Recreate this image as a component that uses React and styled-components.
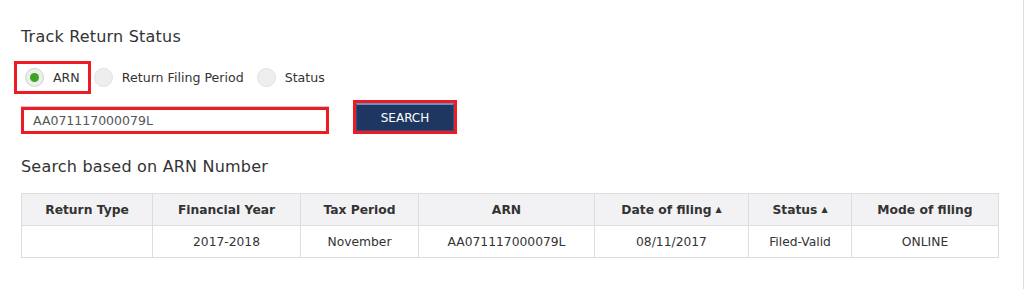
import React, { useState } from "react";
import styled, { createGlobalStyle } from "styled-components";

const GlobalStyle = createGlobalStyle`
  body {
    margin: 0;
    background: #fff;
    font-family: "DejaVu Sans", Verdana, sans-serif;
    color: #333;
  }
`;

const columns = [
  { label: "Return Type", width: 131 },
  { label: "Financial Year", width: 148 },
  { label: "Tax Period", width: 118 },
  { label: "ARN", width: 176 },
  { label: "Date of filing", width: 154, sort: true },
  { label: "Status", width: 103, sort: true },
  { label: "Mode of filing", width: 147 },
];

const rows = [["", "2017-2018", "November", "AA071117000079L", "08/11/2017", "Filed-Valid", "ONLINE"]];

const options = [
  { id: "arn", label: "ARN" },
  { id: "period", label: "Return Filing Period" },
  { id: "status", label: "Status" },
];

export default function App() {
  const [selected, setSelected] = useState("arn");
  const [arn, setArn] = useState("AA071117000079L");

  return (
    <Page>
      <GlobalStyle />
      <Title>Track Return Status</Title>
      <RadioRow>
        {options.map((opt) => (
          <RadioOption
            key={opt.id}
            $highlighted={opt.id === "arn"}
            onClick={() => setSelected(opt.id)}
          >
            <RadioCircle $checked={selected === opt.id} />
            <RadioLabel>{opt.label}</RadioLabel>
          </RadioOption>
        ))}
      </RadioRow>
      <SearchRow>
        <InputFrame>
          <ArnInput value={arn} onChange={(e) => setArn(e.target.value)} />
        </InputFrame>
        <ButtonFrame>
          <SearchButton>SEARCH</SearchButton>
        </ButtonFrame>
      </SearchRow>
      <SubTitle>Search based on ARN Number</SubTitle>
      <Table>
        <colgroup>
          {columns.map((c) => (
            <col key={c.label} style={{ width: c.width }} />
          ))}
        </colgroup>
        <thead>
          <tr>
            {columns.map((c) => (
              <Th key={c.label}>
                {c.label}
                {c.sort && <SortArrow>▲</SortArrow>}
              </Th>
            ))}
          </tr>
        </thead>
        <tbody>
          {rows.map((r, i) => (
            <tr key={i}>
              {r.map((cell, j) => (
                <Td key={j}>{cell}</Td>
              ))}
            </tr>
          ))}
        </tbody>
      </Table>
    </Page>
  );
}

const Page = styled.div`
  box-sizing: border-box;
  width: 1024px;
  height: 289px;
  padding: 27px 0 0 21px;
  border-right: 1px solid #ddd;
  display: flex;
  flex-direction: column;
  align-items: flex-start;
`;

const Title = styled.div`
  font-size: 16px;
  line-height: 20px;
  letter-spacing: 0.2px;
  color: #333;
`;

const RadioRow = styled.div`
  display: flex;
  align-items: center;
  margin-top: 14px;
  margin-left: -7px;
`;

const RadioOption = styled.label`
  display: flex;
  align-items: center;
  gap: 9px;
  height: 27px;
  padding: 0 ${(p) => (p.$highlighted ? "8px" : "7px")} 0 ${(p) => (p.$highlighted ? "8px" : "0")};
  border: 3px solid ${(p) => (p.$highlighted ? "#ed1c24" : "transparent")};
  cursor: pointer;
`;

const RadioCircle = styled.span`
  box-sizing: border-box;
  width: 19px;
  height: 19px;
  border-radius: 50%;
  background: #eee;
  border: 1px solid ${(p) => (p.$checked ? "#c9d9c4" : "#e2e2e2")};
  display: flex;
  align-items: center;
  justify-content: center;
  &::after {
    content: "";
    display: ${(p) => (p.$checked ? "block" : "none")};
    width: 9px;
    height: 9px;
    border-radius: 50%;
    background: #3aa61f;
  }
`;

const RadioLabel = styled.span`
  font-size: 12.6px;
  color: #333;
`;

const SearchRow = styled.div`
  display: flex;
  align-items: center;
  gap: 24px;
  margin-top: 6px;
`;

const InputFrame = styled.div`
  box-sizing: border-box;
  width: 308px;
  height: 27px;
  margin-top: 6px;
  border: 3px solid #ed1c24;
  box-shadow: 0 -1px 0 #ccc;
  display: flex;
`;

const ArnInput = styled.input`
  flex: 1;
  border: none;
  outline: none;
  padding: 0 0 0 9px;
  font-family: "DejaVu Sans", Verdana, sans-serif;
  font-size: 12.5px;
  color: #555;
  background: #fff;
`;

const ButtonFrame = styled.div`
  border: 3px solid #ed1c24;
  display: flex;
`;

const SearchButton = styled.button`
  box-sizing: border-box;
  width: 98px;
  height: 28px;
  background: #1e3760;
  border: 1px solid #2f4f80;
  border-top: 2px solid #6d8fc4;
  color: #fff;
  font-family: "DejaVu Sans", Verdana, sans-serif;
  font-size: 12px;
  cursor: pointer;
`;

const SubTitle = styled.div`
  font-size: 16px;
  line-height: 20px;
  letter-spacing: 0.2px;
  margin-top: 23px;
  color: #333;
`;

const Table = styled.table`
  margin-top: 16px;
  width: 977px;
  border-collapse: collapse;
  table-layout: fixed;
  font-size: 12.3px;
`;

const Th = styled.th`
  height: 31px;
  padding: 0;
  background: #f2f2f4;
  border: 1px solid #ddd;
  font-weight: bold;
  color: #333;
  text-align: center;
`;

const SortArrow = styled.span`
  font-size: 8px;
  margin-left: 4px;
  vertical-align: 2px;
`;

const Td = styled.td`
  height: 31px;
  padding: 0;
  border: 1px solid #ddd;
  color: #333;
  text-align: center;
`;
